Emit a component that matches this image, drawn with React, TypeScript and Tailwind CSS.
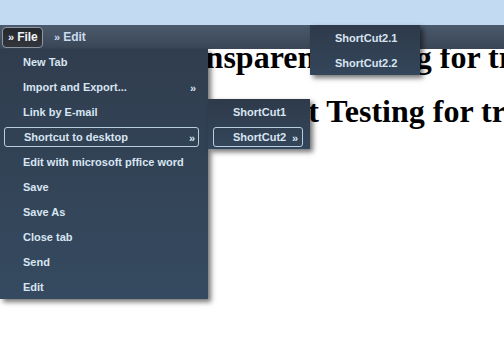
const ITEMS = [
  { label: "New Tab" },
  { label: "Import and Export...", sub: true },
  { label: "Link by E-mail" },
  { label: "Shortcut to desktop", sub: true, active: true },
  { label: "Edit with microsoft pffice word" },
  { label: "Save" },
  { label: "Save As" },
  { label: "Close tab" },
  { label: "Send" },
  { label: "Edit" },
];

function MenuRow({
  label,
  sub,
  active,
  pl = "pl-[23px]",
}: {
  label: string;
  sub?: boolean;
  active?: boolean;
  pl?: string;
}) {
  if (active) {
    return (
      <div className="h-[25px] pt-[3px] pb-[2px] pl-[4px] pr-[9px]">
        <div className="relative h-[20px] flex items-center pl-[19px] border border-[#b9cde0] rounded-[3px]">
          <span>{label}</span>
          {sub && <span className="absolute right-[3px] top-[2px]">»</span>}
        </div>
      </div>
    );
  }
  return (
    <div className={`relative h-[25px] flex items-center pt-[2px] ${pl}`}>
      <span>{label}</span>
      {sub && <span className="absolute right-[12px] top-[6px]">»</span>}
    </div>
  );
}

export default function App() {
  return (
    <div
      className="relative w-[504px] h-[344px] overflow-hidden bg-white"
      style={{ fontFamily: '"Liberation Sans", Arial, sans-serif' }}
    >
      <div className="h-[25px] bg-[#c2dbf3]" />

      {/* menubar */}
      <div className="relative z-10 h-[24px] bg-gradient-to-b from-[#4b5a6c] to-[#3a4656] flex items-center gap-[11px] px-[2px] text-[12px] font-bold">
        <div className="h-[21px] w-[41px] flex items-center pl-[5px] rounded-[4px] border border-[#8d99a6] bg-gradient-to-b from-[#25282d] to-[#33373d] text-[#eef3f8]">
          <span className="text-[11px] mr-[3px]">»</span>File
        </div>
        <div className="flex items-center text-[#c9dcef]">
          <span className="text-[11px] mr-[3px]">»</span>Edit
        </div>
      </div>

      {/* page content */}
      <div className="-mt-[9px] pl-[69px] whitespace-nowrap text-black" style={{ fontFamily: '"Liberation Serif", "Times New Roman", serif' }}>
        <h1 className="text-[32px] font-bold leading-[34px]">Menu Transparent Testing for transparency</h1>
        <h1 className="mt-[20px] -ml-[7px] text-[32px] font-bold leading-[34px]">Menu Transparent Testing for transparency</h1>
      </div>

      {/* File dropdown */}
      <div className="absolute z-20 left-0 top-[49px] w-[208px] bg-gradient-to-b from-[#303d4e] to-[#354a60] text-[11px] font-bold text-[#d8e5f2] shadow-[3px_3px_5px_rgba(0,0,0,0.55)]">
        {ITEMS.map((it) => (
          <MenuRow key={it.label} {...it} />
        ))}
      </div>

      {/* submenu level 1 */}
      <div className="absolute z-20 left-[208px] top-[99px] w-[102px] bg-gradient-to-b from-[#2e3a4a] to-[#34465b] text-[11px] font-bold text-[#d8e5f2] shadow-[3px_3px_5px_rgba(0,0,0,0.55)]">
        <MenuRow label="ShortCut1" pl="pl-[25px]" />
        <div className="h-[25px] pt-[3px] pb-[2px] pl-[5px] pr-[7px]">
          <div className="relative h-[20px] flex items-center pl-[19px] border border-[#b9cde0] rounded-[3px]">
            <span>ShortCut2</span>
            <span className="absolute right-[4px] top-[2px]">»</span>
          </div>
        </div>
      </div>

      {/* submenu level 2 */}
      <div className="absolute z-20 left-[310px] top-[25px] w-[110px] bg-gradient-to-b from-[#2e3a4a] to-[#34465b] text-[11px] font-bold text-[#d8e5f2] shadow-[3px_3px_5px_rgba(0,0,0,0.55)]">
        <MenuRow label="ShortCut2.1" pl="pl-[25px]" />
        <MenuRow label="ShortCut2.2" pl="pl-[25px]" />
      </div>
    </div>
  );
}
